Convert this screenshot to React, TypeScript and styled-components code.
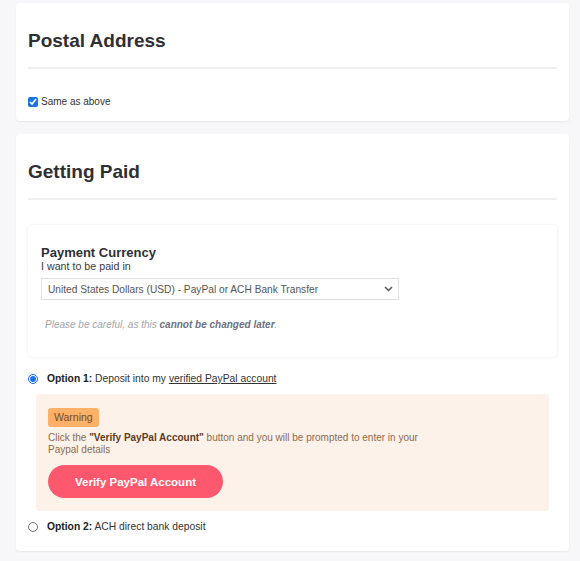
import React, { useState } from "react";
import styled, { createGlobalStyle } from "styled-components";

const GlobalStyle = createGlobalStyle`
  body {
    margin: 0;
    background: #f7f7f9;
    font-family: "Liberation Sans", Arial, sans-serif;
    color: #333;
  }
`;

const Page = styled.div`
  display: flex;
  flex-direction: column;
  gap: 13px;
  padding: 3px 11px 11px 16px;
`;

const Card = styled.section`
  background: #fff;
  border-radius: 4px;
  box-shadow: 0 1px 2px rgba(0, 0, 0, 0.07);
  padding: 26px 12px ${p => (p.$bottom ? p.$bottom : 13)}px;
`;

const Heading = styled.h2`
  margin: 0;
  font-size: 19px;
  line-height: 23px;
  font-weight: 700;
  color: #2f3033;
`;

const Divider = styled.hr`
  border: none;
  height: 2px;
  background: #eeeeef;
  margin: 15px 0 0;
`;

const CheckRow = styled.label`
  display: flex;
  align-items: center;
  gap: 3px;
  margin-top: ${p => p.$top}px;
  font-size: 10px;
  line-height: 13px;
  color: #333;
`;

const SmallCheck = styled.input`
  width: 10px;
  height: 10px;
  margin: 0;
  accent-color: #1a73e8;
`;

const InnerCard = styled.div`
  margin-top: 25px;
  background: #fff;
  border-radius: 4px;
  box-shadow: 0 0 3px rgba(0, 0, 0, 0.1);
  padding: 20px 13px 26px;
`;

const SubHeading = styled.h3`
  margin: 0;
  font-size: 13px;
  line-height: 15px;
  font-weight: 700;
  color: #2f3033;
`;

const Label = styled.div`
  font-size: 10.7px;
  line-height: 13px;
  color: #3a3a3a;
`;

const SelectWrap = styled.div`
  position: relative;
  width: 358px;
  margin-top: 5px;
`;

const Select = styled.select`
  appearance: none;
  width: 100%;
  height: 22px;
  border: 1px solid #dde0e6;
  border-radius: 0;
  background: #fff;
  padding: 0 20px 0 6px;
  font-family: inherit;
  font-size: 10.2px;
  color: #555;
`;

const Chevron = styled.svg`
  position: absolute;
  right: 6px;
  top: 8px;
  pointer-events: none;
`;

const Note = styled.p`
  margin: 19px 0 0 4px;
  font-size: 10px;
  line-height: 12px;
  font-style: italic;
  color: #a3a6ad;

  b {
    color: #6d7280;
  }
`;

const OptionRow = styled.label`
  display: flex;
  align-items: center;
  gap: 9px;
  margin-top: ${p => p.$top}px;
  font-size: 10.3px;
  line-height: 13px;
  color: #333;

  b {
    color: #222;
  }

  u {
    text-underline-offset: 1px;
  }
`;

const Radio = styled.input`
  width: 10px;
  height: 10px;
  margin: 0;
  accent-color: #1a73e8;
`;

const WarningBox = styled.div`
  margin: 9px 8px 0;
  background: #fdf2e9;
  border-radius: 3px;
  padding: 13px 12px;
`;

const Badge = styled.span`
  display: inline-block;
  background: #fcb068;
  color: #7a4a28;
  border-radius: 3px;
  font-size: 10.5px;
  line-height: 19px;
  padding: 0 6px;
`;

const WarningText = styled.p`
  margin: 5px 0 0;
  max-width: 380px;
  font-size: 10px;
  line-height: 11.5px;
  color: #8d6b4e;

  b {
    color: #5e3b1e;
  }
`;

const PrimaryButton = styled.button`
  display: block;
  margin-top: 10px;
  width: 175px;
  height: 33px;
  border: none;
  border-radius: 17px;
  background: #fd586d;
  color: #fff;
  font-family: inherit;
  font-size: 11.5px;
  font-weight: 700;
  cursor: pointer;
`;

export default function App() {
  const [same, setSame] = useState(true);
  const [option, setOption] = useState("paypal");

  return (
    <>
      <GlobalStyle />
      <Page>
        <Card>
          <Heading>Postal Address</Heading>
          <Divider />
          <CheckRow $top={26}>
            <SmallCheck
              type="checkbox"
              checked={same}
              onChange={e => setSame(e.target.checked)}
            />
            Same as above
          </CheckRow>
        </Card>

        <Card $bottom={18}>
          <Heading>Getting Paid</Heading>
          <Divider />
          <InnerCard>
            <SubHeading>Payment Currency</SubHeading>
            <Label>I want to be paid in</Label>
            <SelectWrap>
              <Select defaultValue="usd">
                <option value="usd">
                  United States Dollars (USD) - PayPal or ACH Bank Transfer
                </option>
              </Select>
              <Chevron width="9" height="6" viewBox="0 0 9 6">
                <path
                  d="M1 1l3.5 3.5L8 1"
                  fill="none"
                  stroke="#555"
                  strokeWidth="1.5"
                />
              </Chevron>
            </SelectWrap>
            <Note>
              Please be careful, as this <b>cannot be changed later</b>.
            </Note>
          </InnerCard>

          <OptionRow $top={15}>
            <Radio
              type="radio"
              name="payout"
              checked={option === "paypal"}
              onChange={() => setOption("paypal")}
            />
            <span>
              <b>Option 1:</b> Deposit into my <u>verified PayPal account</u>
            </span>
          </OptionRow>

          {option === "paypal" && (
            <WarningBox>
              <Badge>Warning</Badge>
              <WarningText>
                Click the <b>"Verify PayPal Account"</b> button and you will be
                prompted to enter in your Paypal details
              </WarningText>
              <PrimaryButton>Verify PayPal Account</PrimaryButton>
            </WarningBox>
          )}

          <OptionRow $top={9}>
            <Radio
              type="radio"
              name="payout"
              checked={option === "ach"}
              onChange={() => setOption("ach")}
            />
            <span>
              <b>Option 2:</b> ACH direct bank deposit
            </span>
          </OptionRow>
        </Card>
      </Page>
    </>
  );
}
